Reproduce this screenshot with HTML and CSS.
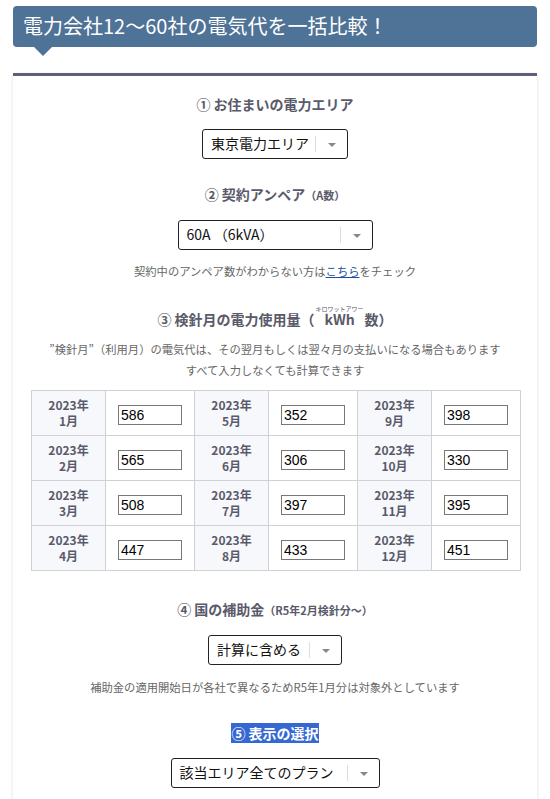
FILE: index.html
```html
<!DOCTYPE html>
<html lang="ja">
<head>
    <meta charset="UTF-8">
    <meta name="viewport" content="width=device-width, initial-scale=1.0">
    <title>電気代一括比較</title>
    <link rel="stylesheet" href="styles.css">
</head>
<body>
    <div class="title-box">
        <h1>電力会社12～60社の電気代を一括比較！</h1>
    </div>

    <div class="form-card">
        <h3 class="step">① お住まいの電力エリア</h3>
        <div class="select-box w-area">
            <span class="select-value">東京電力エリア</span>
            <span class="select-btn"></span>
        </div>

        <h3 class="step step-2">② 契約アンペア<small>（A数）</small></h3>
        <div class="select-box w-amp">
            <span class="select-value">60A （6kVA）</span>
            <span class="select-btn"></span>
        </div>
        <p class="note note-amp">契約中のアンペア数がわからない方は<a href="#">こちら</a>をチェック</p>

        <h3 class="step step-3">③ 検針月の電力使用量（<ruby>kWh<rt>キロワットアワー</rt></ruby>数）</h3>
        <p class="note note-usage">”検針月”（利用月）の電気代は、その翌月もしくは翌々月の支払いになる場合もあります<br>すべて入力しなくても計算できます</p>

        <table class="usage-table">
            <tr>
                <th>2023年<br>1月</th><td><input type="text" value="586"></td>
                <th>2023年<br>5月</th><td><input type="text" value="352"></td>
                <th>2023年<br>9月</th><td><input type="text" value="398"></td>
            </tr>
            <tr>
                <th>2023年<br>2月</th><td><input type="text" value="565"></td>
                <th>2023年<br>6月</th><td><input type="text" value="306"></td>
                <th>2023年<br>10月</th><td><input type="text" value="330"></td>
            </tr>
            <tr>
                <th>2023年<br>3月</th><td><input type="text" value="508"></td>
                <th>2023年<br>7月</th><td><input type="text" value="397"></td>
                <th>2023年<br>11月</th><td><input type="text" value="395"></td>
            </tr>
            <tr>
                <th>2023年<br>4月</th><td><input type="text" value="447"></td>
                <th>2023年<br>8月</th><td><input type="text" value="433"></td>
                <th>2023年<br>12月</th><td><input type="text" value="451"></td>
            </tr>
        </table>

        <h3 class="step step-4">④ 国の補助金<small>（R5年2月検針分～）</small></h3>
        <div class="select-box w-subsidy">
            <span class="select-value">計算に含める</span>
            <span class="select-btn"></span>
        </div>
        <p class="note note-subsidy">補助金の適用開始日が各社で異なるためR5年1月分は対象外としています</p>

        <h3 class="step step-5"><span class="selected">⑤ 表示の選択</span></h3>
        <div class="select-box w-plan">
            <span class="select-value">該当エリア全てのプラン</span>
            <span class="select-btn"></span>
        </div>
    </div>
</body>
</html>
```

FILE: styles.css
```css
body {
    margin: 0;
    padding: 6px 13px 0;
    background-color: #fff;
    font-family: "Noto Sans CJK JP", "Noto Sans", sans-serif;
    color: #333;
}
.title-box {
    position: relative;
    background-color: #4f7397;
    border-radius: 4px;
    height: 41px;
    padding: 0 10px;
}
.title-box::after {
    content: "";
    position: absolute;
    left: 21px;
    bottom: -9px;
    border-left: 9px solid transparent;
    border-right: 9px solid transparent;
    border-top: 9px solid #4f7397;
}
.title-box h1 {
    margin: 0;
    color: #fff;
    font-size: 20px;
    font-weight: normal;
    line-height: 40px;
}
.form-card {
    margin-top: 26px;
    border-top: 3px solid #5b5f7a;
    box-shadow: 0 1px 3px rgba(0,0,0,0.15);
    padding: 17px 18px 30px;
    text-align: center;
}
.step {
    margin: 0;
    font-size: 14px;
    line-height: 23px;
    color: #5a5a6a;
}
.step small {
    font-size: 11px;
}
.step-2 { margin-top: 24px; }
.step-3 { margin-top: 23px; }
.step-4 { margin-top: 27px; }
.step-5 { margin-top: 24px; }
.step ruby {
    margin: 0 4px;
}
.step ruby rt {
    font-size: 6px;
    line-height: 6px;
    font-weight: normal;
}
.selected {
    background-color: #3668d3;
    color: #fff;
}
.select-box {
    display: flex;
    align-items: center;
    height: 28px;
    margin: 13px auto 0;
    border: 1px solid #222;
    border-radius: 3px;
    text-align: left;
    background-color: #fff;
}
.select-value {
    flex: 1;
    padding-left: 8px;
    font-size: 14px;
    color: #111;
    line-height: 20px;
    padding-bottom: 3px;
}
.select-btn {
    position: relative;
    width: 31px;
    height: 16px;
    border-left: 1px solid #ddd;
}
.select-btn::after {
    content: "";
    position: absolute;
    left: 12px;
    top: 7px;
    border-left: 4px solid transparent;
    border-right: 4px solid transparent;
    border-top: 4px solid #888;
}
.w-area { width: 144px; }
.w-amp { width: 193px; }
.w-subsidy { width: 132px; }
.w-plan { width: 207px; }
.note {
    margin: 0;
    font-size: 11.3px;
    color: #666;
    line-height: 21px;
}
.note a {
    color: #1a4fa0;
}
.note-amp { margin-top: 11px; }
.note-usage { margin-top: 8px; }
.note-subsidy { margin-top: 12px; }
.usage-table {
    width: 486px;
    margin-top: 9px;
    border-collapse: collapse;
    table-layout: fixed;
}
.usage-table th,
.usage-table td {
    border: 1px solid #d0d0d6;
    height: 44px;
    padding: 0;
}
.usage-table th {
    width: 73px;
    background-color: #f7f8fc;
    font-size: 12px;
    line-height: 16px;
    color: #5a5a6a;
}
.usage-table td {
    width: 88px;
}
.usage-table input {
    width: 58px;
    height: 18px;
    padding: 0 2px;
    border: 1px solid #777;
    font-family: "Liberation Sans", Arial, sans-serif;
    font-size: 14px;
    color: #000;
}
```
